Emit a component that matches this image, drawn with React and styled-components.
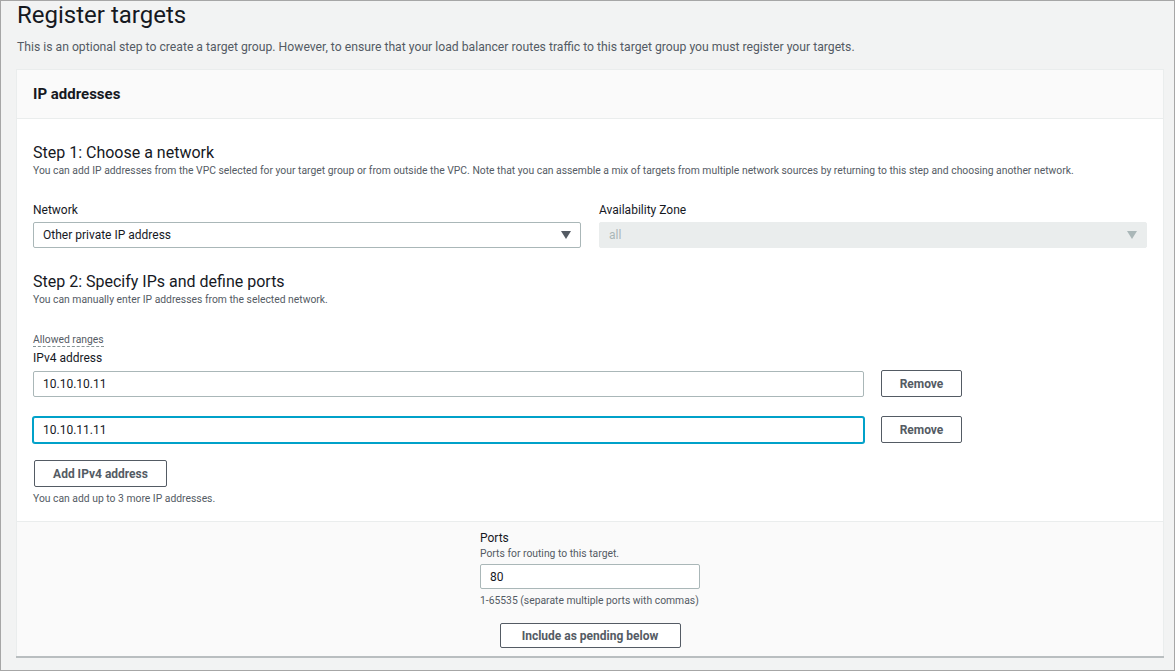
import React from 'react';
import styled, { createGlobalStyle } from 'styled-components';

const Global = createGlobalStyle`
  body {
    margin: 0;
    background: #ffffff;
    font-family: Roboto, "Liberation Sans", Arial, sans-serif;
    color: #16191f;
  }
  * { box-sizing: border-box; }
`;

const Frame = styled.div`
  width: 1175px;
  height: 671px;
  border: 1px solid #a6a6a6;
  background: #f2f3f3;
  padding: 0 10px 0 15px;
  overflow: hidden;
`;

const Title = styled.h1`
  margin: 0;
  padding: 0 0 0 1px;
  height: 30px;
  line-height: 28px;
  font-size: 24px;
  font-weight: 400;
  color: #16191f;
`;

const Lead = styled.p`
  margin: 9px 0 15px 1px;
  font-size: 12.2px;
  line-height: 14px;
  color: #545b64;
`;

const Card = styled.section`
  border: 1px solid #eaeded;
  border-bottom: none;
  box-shadow: 0 2px 0 #b9bec0;
  background: #fff;
`;

const CardHeader = styled.div`
  height: 49px;
  display: flex;
  align-items: center;
  padding: 0 16px;
  background: #fafafa;
  border-bottom: 1px solid #eaeded;
  font-size: 15px;
  font-weight: 700;
`;

const CardBody = styled.div`
  padding: 24px 17px 15px 16px;
`;

const StepTitle = styled.h3`
  margin: ${(p) => p.$top || 0}px 0 0;
  font-size: 16px;
  line-height: 20px;
  font-weight: 400;
`;

const Hint = styled.div`
  margin-top: ${(p) => p.$top || 0}px;
  font-size: 10.35px;
  line-height: 14px;
  color: #545b64;
`;

const Columns = styled.div`
  display: grid;
  grid-template-columns: 548px 548px;
  gap: 18px;
  margin-top: 24px;
`;

const Label = styled.div`
  font-size: 12px;
  line-height: 16px;
  margin-bottom: 4px;
  color: #16191f;
`;

const SelectBox = styled.div`
  height: 26px;
  display: flex;
  align-items: center;
  justify-content: space-between;
  padding: 0 9px 0 9px;
  font-size: 12px;
  border: 1px solid ${(p) => (p.$disabled ? '#eaeded' : '#aab7b8')};
  background: ${(p) => (p.$disabled ? '#eaeded' : '#fff')};
  color: ${(p) => (p.$disabled ? '#aab7b8' : '#16191f')};
  border-radius: 2px;
`;

const Caret = ({ color }) => (
  <svg width="10" height="8" viewBox="0 0 10 8">
    <path d="M0 0 L10 0 L5 8 Z" fill={color} />
  </svg>
);

const RangeLink = styled.span`
  display: inline-block;
  margin-top: 26px;
  font-size: 10.35px;
  line-height: 13px;
  color: #545b64;
  border-bottom: 1px dashed #879596;
`;

const FieldLabel = styled(Label)`
  margin: 3px 0 4px;
`;

const IpRow = styled.div`
  display: flex;
  gap: 17px;
  align-items: center;
  margin-bottom: ${(p) => p.$gap || 0}px;
`;

const TextInput = styled.div`
  height: ${(p) => p.$h || 26}px;
  width: ${(p) => p.$w}px;
  margin-top: ${(p) => p.$top || 0}px;
  display: flex;
  align-items: center;
  padding: 0 9px;
  font-size: 12px;
  background: #fff;
  border: 1px solid ${(p) => (p.$focus ? '#00a1c9' : '#aab7b8')};
  box-shadow: ${(p) => (p.$focus ? '0 0 0 1px #00a1c9' : 'none')};
  border-radius: 2px;
`;

const Button = styled.button`
  height: 27px;
  width: ${(p) => p.$w}px;
  padding: 0;
  background: #fff;
  border: 1px solid #545b64;
  border-radius: 2px;
  font-family: inherit;
  font-size: 12px;
  font-weight: 700;
  color: #545b64;
  cursor: pointer;
`;

const AddButton = styled(Button)`
  margin: 17px 0 0 1px;
  display: block;
`;

const Footer = styled.div`
  background: #fafafa;
  border-top: 1px solid #eaeded;
  height: 135px;
  display: flex;
  flex-direction: column;
  align-items: center;
  padding-top: 8px;
`;

const PortsCol = styled.div`
  width: 220px;
  display: flex;
  flex-direction: column;
`;

const PortsLabel = styled.div`
  font-size: 12px;
  line-height: 16px;
`;

const IncludeButton = styled(Button)`
  margin-top: 15px;
  height: 25px;
`;

export default function App() {
  return (
    <Frame>
      <Global />
      <Title>Register targets</Title>
      <Lead>
        This is an optional step to create a target group. However, to ensure that your load balancer routes traffic
        to this target group you must register your targets.
      </Lead>
      <Card>
        <CardHeader>IP addresses</CardHeader>
        <CardBody>
          <StepTitle>Step 1: Choose a network</StepTitle>
          <Hint $top={1}>
            You can add IP addresses from the VPC selected for your target group or from outside the VPC. Note that you
            can assemble a mix of targets from multiple network sources by returning to this step and choosing another
            network.
          </Hint>
          <Columns>
            <div>
              <Label>Network</Label>
              <SelectBox>
                <span>Other private IP address</span>
                <Caret color="#545b64" />
              </SelectBox>
            </div>
            <div>
              <Label>Availability Zone</Label>
              <SelectBox $disabled>
                <span>all</span>
                <Caret color="#aab7b8" />
              </SelectBox>
            </div>
          </Columns>
          <StepTitle $top={24}>Step 2: Specify IPs and define ports</StepTitle>
          <Hint $top={1}>You can manually enter IP addresses from the selected network.</Hint>
          <RangeLink>Allowed ranges</RangeLink>
          <FieldLabel>IPv4 address</FieldLabel>
          <IpRow $gap={19}>
            <TextInput $w={831}>10.10.10.11</TextInput>
            <Button $w={81}>Remove</Button>
          </IpRow>
          <IpRow>
            <TextInput $w={831} $focus>10.10.11.11</TextInput>
            <Button $w={81}>Remove</Button>
          </IpRow>
          <AddButton $w={133}>Add IPv4 address</AddButton>
          <Hint $top={5}>You can add up to 3 more IP addresses.</Hint>
        </CardBody>
        <Footer>
          <PortsCol>
            <PortsLabel>Ports</PortsLabel>
            <Hint $top={1}>Ports for routing to this target.</Hint>
            <TextInput $w={220} $h={25} $top={3}>80</TextInput>
            <Hint $top={5}>1-65535 (separate multiple ports with commas)</Hint>
          </PortsCol>
          <IncludeButton $w={181}>Include as pending below</IncludeButton>
        </Footer>
      </Card>
    </Frame>
  );
}
